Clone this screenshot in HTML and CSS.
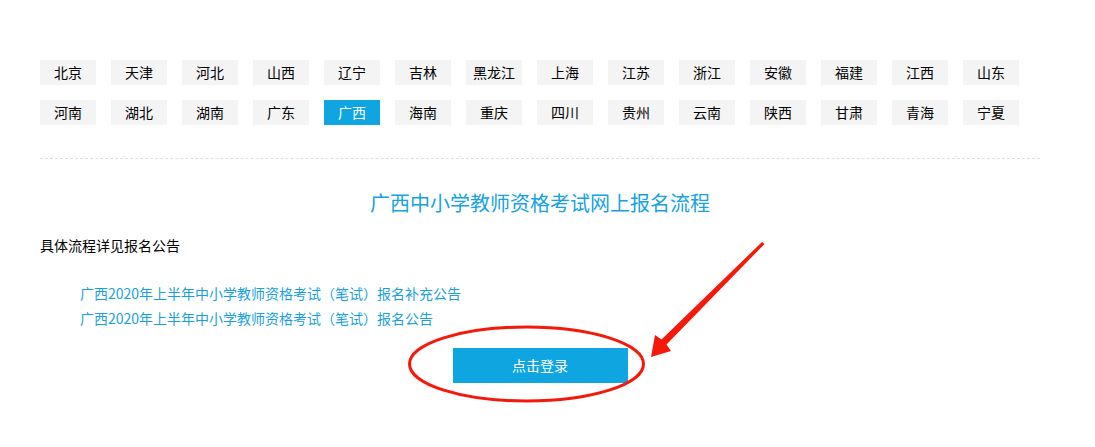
FILE: index.html
```html
<!DOCTYPE html>
<html lang="zh-CN">
<head>
    <meta charset="UTF-8">
    <title>广西中小学教师资格考试网上报名流程</title>
    <link rel="stylesheet" href="styles.css">
</head>
<body>
    <div class="wrap">
        <!-- province tabs -->
        <ul class="province-list">
            <li>北京</li><li>天津</li><li>河北</li><li>山西</li><li>辽宁</li><li>吉林</li><li>黑龙江</li>
            <li>上海</li><li>江苏</li><li>浙江</li><li>安徽</li><li>福建</li><li>江西</li><li>山东</li>
            <li>河南</li><li>湖北</li><li>湖南</li><li>广东</li><li class="active">广西</li><li>海南</li><li>重庆</li>
            <li>四川</li><li>贵州</li><li>云南</li><li>陕西</li><li>甘肃</li><li>青海</li><li>宁夏</li>
        </ul>

        <div class="line"></div>

        <!-- process -->
        <h2 class="flow-title">广西中小学教师资格考试网上报名流程</h2>
        <p class="flow-desc">具体流程详见报名公告</p>
        <ul class="notice-list">
            <li><a href="#">广西2020年上半年中小学教师资格考试（笔试）报名补充公告</a></li>
            <li><a href="#">广西2020年上半年中小学教师资格考试（笔试）报名公告</a></li>
        </ul>
        <div class="btn-row">
            <a class="login-btn" href="#">点击登录</a>
        </div>
    </div>

    <!-- red marks -->
    <svg class="marks" width="1095" height="447" viewBox="0 0 1095 447">
        <ellipse cx="526.5" cy="364" rx="117" ry="37" fill="none" stroke="#f5190c" stroke-width="3"/>
        <polygon fill="#f5190c" points="762,242 661.5,339.5 655,335 651,357 671,351 666.5,344.5 764.5,244"/>
    </svg>
</body>
</html>
```

FILE: styles.css
```css
html, body {
    height: 100%;
}

body {
    margin: 0;
    background: #fff;
    font-family: "Microsoft YaHei", "Noto Sans CJK SC", sans-serif;
    font-size: 14px;
    color: #000;
    position: relative;
    overflow: hidden;
}

.wrap {
    width: 1000px;
    margin-left: 40px;
    padding-top: 60px;
}

/* tabs */
.province-list {
    list-style: none;
    margin: 0;
    padding: 0;
    display: flex;
    flex-wrap: wrap;
    column-gap: 15px;
    row-gap: 15px;
}

.province-list li {
    width: 56px;
    height: 25px;
    line-height: 25px;
    text-align: center;
    background: #f4f4f4;
    font-size: 14px;
}

.province-list li.active {
    background: #0ea5e0;
    color: #fff;
}

.line {
    margin-top: 33px;
    border-top: 1px dashed #dedede;
}

/* process */
.flow-title {
    margin: 29px 0 0;
    font-size: 20px;
    font-weight: normal;
    line-height: 30px;
    text-align: center;
    color: #16a2e3;
}

.flow-desc {
    margin: 17px 0 0;
    line-height: 20px;
}

.notice-list {
    list-style: none;
    margin: 26px 0 0;
    padding-left: 40px;
}

.notice-list li {
    line-height: 25px;
}

.notice-list a {
    color: #1a9fdd;
    text-decoration: none;
}

.btn-row {
    margin-top: 17px;
    display: flex;
    justify-content: center;
}

.login-btn {
    width: 175px;
    height: 35px;
    line-height: 35px;
    text-align: center;
    background: #0ea5e0;
    color: #fff;
    text-decoration: none;
}

.marks {
    position: absolute;
    top: 0;
    left: 0;
    pointer-events: none;
}
```
